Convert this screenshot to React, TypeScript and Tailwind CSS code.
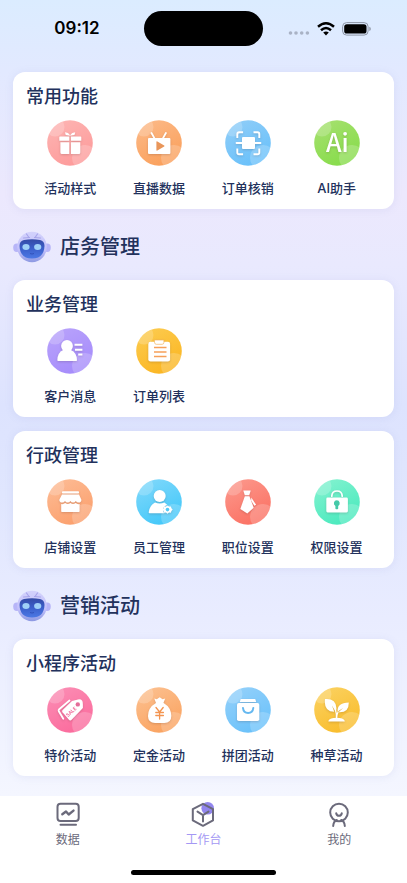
import type { ReactNode } from "react";

const GLYPH_FONT = '"Noto Sans CJK SC", sans-serif';

interface MenuItem {
  id: string;
  label: string;
  from: string;
  to: string;
  glyph: ReactNode;
}

// 圆形底图 + 白色图形
const MenuIcon = ({ id, from, to, glyph }: MenuItem) => (
  <svg viewBox="0 0 46 46" className="size-[46px]" aria-hidden="true">
    <defs>
      <linearGradient id={`bg-${id}`} x1="0.2" y1="0" x2="0.7" y2="1">
        <stop offset="0" stopColor={from} />
        <stop offset="1" stopColor={to} />
      </linearGradient>
      <clipPath id={`clip-${id}`}>
        <circle cx="23" cy="23" r="22.8" />
      </clipPath>
    </defs>
    <circle cx="23" cy="23" r="22.8" fill={`url(#bg-${id})`} />
    <g clipPath={`url(#clip-${id})`} fill="#fff" fillOpacity="0.2">
      <circle cx="8" cy="7" r="9.5" />
      <circle cx="38" cy="38" r="13" />
    </g>
    <g
      className="drop-shadow-[0_1px_1px_rgba(60,30,30,0.18)]"
      fill="#fff"
      stroke="none"
      strokeLinecap="round"
      strokeLinejoin="round"
    >
      {glyph}
    </g>
  </svg>
);

const commonItems: MenuItem[] = [
  {
    id: "style",
    label: "活动样式",
    from: "#fdb4b2",
    to: "#fd9a9a",
    glyph: (
      <>
        <path d="M13 16.5h9.3v4.2H12.3v-3.5q0-.7.7-.7zM23.9 16.5h9.6q.8 0 .8.7v3.5H23.9z" />
        <path d="M13.4 22.2h8.9V34h-7.4q-1.5 0-1.5-1.5zM23.9 22.2h9.4v10.3q0 1.5-1.5 1.5h-7.9z" />
        <path d="M18 12.3q3.5.2 5.1 3 1.6-2.8 5.1-3l-.7 2.6-3.4.6h-2l-3.4-.6z" />
      </>
    ),
  },
  {
    id: "live",
    label: "直播数据",
    from: "#fcb987",
    to: "#fa9f5a",
    glyph: (
      <>
        <path d="M15.5 13l3 5.4M29.9 13l-3 5.4" stroke="#fff" strokeWidth="1.8" />
        <rect x="12" y="18" width="22.4" height="16" rx="1" />
        <path d="M20.4 22v8q0 1 1 .5l6.8-4q.7-.5 0-1l-6.8-4q-1-.5-1 .5z" fill="#e9965a" />
      </>
    ),
  },
  {
    id: "verify",
    label: "订单核销",
    from: "#8fcdf8",
    to: "#68c0fa",
    glyph: (
      <>
        <path
          d="M12.3 18v-4q0-1.8 1.8-1.8h4M28.5 12.2h4q1.8 0 1.8 1.8v4M34.3 28.5v4q0 1.8-1.8 1.8h-4M18.1 34.3h-4q-1.8 0-1.8-1.8v-4"
          fill="none"
          stroke="#fff"
          strokeWidth="1.9"
          strokeLinecap="butt"
        />
        <path d="M11.5 23h24" stroke="#fff" strokeWidth="1.8" />
        <rect x="17" y="17" width="13" height="12" rx="1" />
      </>
    ),
  },
  {
    id: "ai",
    label: "AI助手",
    from: "#a5e06e",
    to: "#86dc4a",
    glyph: (
      <text x="23.4" y="32" textAnchor="middle" fontSize="25" fontWeight="500" fontFamily={GLYPH_FONT}>
        Ai
      </text>
    ),
  },
];

const businessItems: MenuItem[] = [
  {
    id: "customer",
    label: "客户消息",
    from: "#b8a2fb",
    to: "#a58bfb",
    glyph: (
      <>
        <circle cx="20" cy="18" r="5.9" />
        <path d="M16.2 22h7.6q6 2.5 6.2 10.2 0 .8-.8.8H11.1q-.8 0-.8-.8Q10.5 24.5 16.2 22z" />
        <path d="M27.5 16.8h7.9M28 21.8h7.4M31.2 26.5h4.2" stroke="#fff" strokeWidth="1.9" strokeLinecap="butt" />
      </>
    ),
  },
  {
    id: "orders",
    label: "订单列表",
    from: "#fccb4f",
    to: "#fbb520",
    glyph: (
      <>
        <rect x="12.3" y="13.8" width="21.8" height="19.6" rx="2.2" />
        <path d="M18.5 12h9.4v2.5q0 1.8-1.8 1.8h-5.8q-1.8 0-1.8-1.8z" stroke="#f3b45c" strokeWidth="0.7" />
        <path d="M18 19.5h12.5M18 24h12.5M18 28.5h12.5" stroke="#f6a05a" strokeWidth="1.7" strokeLinecap="butt" />
      </>
    ),
  },
];

const adminItems: MenuItem[] = [
  {
    id: "shop",
    label: "店铺设置",
    from: "#fdbb94",
    to: "#fb9f6c",
    glyph: (
      <>
        <rect x="15" y="12.3" width="17" height="2.2" rx="0.8" />
        <path d="M15 15.5h17l2.4 5.3q0 2.8-2.8 2.8-1.8 0-2.8-1.6-1 1.6-2.7 1.6t-2.7-1.6q-1 1.6-2.7 1.6T18 22q-1 1.6-2.8 1.6-2.9 0-2.9-2.8z" />
        <path d="M14.2 25q2.2.5 4-.9 2.6 1.7 5.2 0 2.6 1.7 5.2 0 1.8 1.4 4 .9v7.3q0 .7-.7.7h-17q-.7 0-.7-.7z" />
      </>
    ),
  },
  {
    id: "staff",
    label: "员工管理",
    from: "#7fd8fb",
    to: "#41c7f9",
    glyph: (
      <>
        <circle cx="23.7" cy="17" r="6" />
        <path d="M19 23.5q4.7 2 9.4 0l3 2.4q-4.8 1.6-4.4 5.4.2 1.9 1.3 3H13.6q-1 0-.9-1 .8-7 6.3-9.8z" />
        <path d="M31.5 26.5l1.5 1.1 1.9-.1.5 1.8 1.3 1.3-1.3 1.3-.5 1.8-1.9-.1-1.5 1.1-1.5-1.1-1.9.1-.5-1.8-1.3-1.3 1.3-1.3.5-1.8 1.9.1z" />
        <circle cx="31.5" cy="30.6" r="1.8" fill="#52caf7" />
      </>
    ),
  },
  {
    id: "position",
    label: "职位设置",
    from: "#fc978b",
    to: "#fb7062",
    glyph: (
      <>
        <path d="M18.3 11.5h7.4l-1.5 4.8h-4.4z" />
        <path d="M19.8 17.2h4.6l4.3 11.6-6.4 5.7-7-4.6z" />
        <path d="M26.3 18.5l4.8 7.2-1.7 1-3.2-5z" />
      </>
    ),
  },
  {
    id: "permission",
    label: "权限设置",
    from: "#82f2cf",
    to: "#48e9bd",
    glyph: (
      <>
        <path d="M17.8 17.2v-.3q.3-4.9 5.2-4.9t5.2 4.9v.3" fill="none" stroke="#fff" strokeWidth="1.7" />
        <rect x="12.3" y="18.6" width="21.6" height="14.8" rx="1.3" />
        <path
          d="M22.8 21.3a3 3 0 0 1 1.4 5.6v2.6q0 .8-.8.8h-1.2q-.8 0-.8-.8v-2.6a3 3 0 0 1 1.4-5.6z"
          fill="#45c9a8"
        />
      </>
    ),
  },
];

const marketingItems: MenuItem[] = [
  {
    id: "special",
    label: "特价活动",
    from: "#fb8db4",
    to: "#fb6a9c",
    glyph: (
      <>
        <path d="M22.5 13.5l-10.3 8.7q-1 1-.4 2l4.5 7.6" fill="none" stroke="#fff" strokeWidth="1.8" />
        <path d="M25 14l6-1.6q3-.4 4.2 1.4.8 1.4.7 7.2l-11 11.6q-1.7 1.7-3.2 0l-6.2-7.3q-.8-1.2.2-2.2z" />
        <circle cx="30.8" cy="17.4" r="2.2" fill="#e46c99" />
        <text
          x="25.5"
          y="26"
          transform="rotate(-43 25.5 26)"
          textAnchor="middle"
          fontSize="5"
          fontWeight="700"
          fontFamily={GLYPH_FONT}
          fill="#f0709d"
        >
          SALE
        </text>
      </>
    ),
  },
  {
    id: "deposit",
    label: "定金活动",
    from: "#fcc08f",
    to: "#faa25f",
    glyph: (
      <>
        <path d="M18.3 11.5l2.5.7 2.9-1.9 2.9 1.9 2.6-.7-1.9 4.7h-7.2z" />
        <path d="M20 16h7.6q7.6 4.5 7.7 13 0 7-7 7h-9.2q-7 0-7.100-7Q12 20.500 20 16z" />
        <path
          d="M20 20.500l3.600 4.500 3.600-4.500M23.600 25v7M19.800 25.500h7.600M19.800 28.500h7.600"
          fill="none"
          stroke="#f39450"
          strokeWidth="1.300"
        />
      </>
    ),
  },
  {
    id: "group",
    label: "拼团活动",
    from: "#93d0fa",
    to: "#69c1fa",
    glyph: (
      <>
        <path d="M15.7 12h14.500l1 2.900H14.700z" />
        <rect x="12" y="16" width="22.3" height="18" rx="1.8" />
        <path d="M18 21q.5 5 5.100 5t5.200-5" fill="none" stroke="#65b8f0" strokeWidth="2" />
      </>
    ),
  },
  {
    id: "seed",
    label: "种草活动",
    from: "#fbd160",
    to: "#f9bc2a",
    glyph: (
      <>
        <path d="M11 12q11-.8 11.4 9 .1 2-.8 3.700l-3.600-6.300 2.200 6.300Q9.500 24.500 11 12z" />
        <path d="M34.8 15.500Q35 26 24.500 25.300l4.600-4.400-5.400 3.600q-1-8.500 11.100-9z" />
        <path d="M21.500 23q1.200 3.500.9 8.500M24 25q-1.200 2.500-1.300 6" fill="none" stroke="#fff" strokeWidth="1.2" />
        <path d="M14.300 34q1.500-3.200 8.300-3.200t8.200 3.200q0 .6-.8.600H15q-.7 0-.7-.6z" />
      </>
    ),
  },
];

const StatusBar = () => (
  <header className="grid h-[72px] grid-cols-[1fr_119px_1fr] items-start pt-[11px]">
    <div className="flex h-[35px] items-center justify-center pl-[10px] font-[Inter] text-[17px] font-semibold text-black">
      09:12
    </div>
    <div className="h-[35px] rounded-full bg-black" />
    <div className="flex h-[35px] items-center justify-end gap-[7px] pr-9">
      <svg viewBox="0 0 22 14" className="h-[14px] w-[22px]" fill="#a9b2c5" aria-hidden="true">
        <circle cx="2.5" cy="11" r="1.8" />
        <circle cx="8" cy="11" r="1.8" />
        <circle cx="13.7" cy="11" r="1.8" />
        <circle cx="19.4" cy="11" r="1.8" />
      </svg>
      <svg viewBox="0 0 18 14" className="h-[14px] w-[18px]" aria-hidden="true">
        <g fill="none" stroke="#000" strokeWidth="2.5">
          <path d="M1 4.800q8-7 16 0" />
          <path d="M4 8.200q5-4.400 10 0" />
        </g>
        <path d="M9 13.400l-2.800-2.900q2.800-2.200 5.600 0z" />
      </svg>
      <svg viewBox="0 0 29 14" className="h-[14px] w-[29px]" aria-hidden="true">
        <rect x="0.6" y="0.6" width="25.5" height="12.5" rx="4" fill="none" stroke="#8d95a5" />
        <rect x="2.2" y="2.2" width="22.3" height="9.3" rx="2.6" />
        <path d="M27.300 4.800q1.500.6 1.500 2.100t-1.500 2.100z" fill="#8d95a5" />
      </svg>
    </div>
  </header>
);

const Robot = ({ id }: { id: string }) => (
  <svg viewBox="0 0 38 32" className="h-8 w-[38px]" aria-hidden="true">
    <defs>
      <linearGradient id={`head-${id}`} x1="0" y1="0" x2="0" y2="1">
        <stop offset="0" stopColor="#d3d2fc" />
        <stop offset="0.6" stopColor="#c3c1fa" />
        <stop offset="1" stopColor="#8c98e2" />
      </linearGradient>
      <linearGradient id={`face-${id}`} x1="0" y1="0" x2="0" y2="1">
        <stop offset="0" stopColor="#334aa6" />
        <stop offset="0.5" stopColor="#3c60cc" />
        <stop offset="1" stopColor="#4b78e4" />
      </linearGradient>
    </defs>
    <ellipse cx="3.8" cy="16.8" rx="3.6" ry="4.2" fill="#b7b5f8" />
    <ellipse cx="34.2" cy="16.8" rx="3.6" ry="4.2" fill="#b7b5f8" />
    <ellipse cx="19" cy="16" rx="14.8" ry="15.3" fill={`url(#head-${id})`} />
    <path
      d="M13.500 3l2.500 3.500M24.500 3l-2.500 3.500M10.500 7l6-.5M27.500 7l-6-.5"
      stroke="#a8a5ea"
      strokeWidth="1.2"
      strokeLinecap="round"
    />
    <path d="M11 9q8-1.400 16 0 4.500 1 4.500 6Q31 27.500 19 27.500T6.500 15q0-5 4.500-6z" fill={`url(#face-${id})`} />
    <ellipse cx="13" cy="16" rx="3.6" ry="3" fill="#9fd0f8" />
    <ellipse cx="24.7" cy="16" rx="3.600" ry="3" fill="#9fd0f8" />
    <path d="M17 22.500q2 1 4 0" stroke="#2c4bb4" strokeWidth="0.8" fill="none" />
  </svg>
);

const SectionTitle = ({ id, title }: { id: string; title: string }) => (
  <div className="flex h-[71px] items-center gap-[9px] pt-[5px]">
    <Robot id={id} />
    <h2 className="text-[20px] leading-7 font-medium">{title}</h2>
  </div>
);

const MenuCard = ({ title, items }: { title: string; items: MenuItem[] }) => (
  <section className="rounded-xl bg-white px-[13px] pt-[13px] pb-3 shadow-[0_1px_8px_rgba(120,130,200,0.12)]">
    <h3 className="text-[18px] leading-6 font-medium">{title}</h3>
    <div className="mt-[11px] grid grid-cols-4">
      {items.map((item) => (
        <button key={item.id} type="button" className="flex flex-col items-center gap-[13px]">
          <MenuIcon {...item} />
          <span className="text-[13px] leading-[18px] font-medium">{item.label}</span>
        </button>
      ))}
    </div>
  </section>
);

const tabs = [
  {
    label: "数据",
    active: false,
    icon: (
      <>
        <rect x="2.5" y="1.8" width="21.2" height="17.2" rx="3" />
        <path d="M7.300 12.300l3.700-2.800 2.700 3 4.800-3.900" strokeWidth="2.4" />
        <path d="M5.500 22.700h15.500" />
      </>
    ),
  },
  {
    label: "工作台",
    active: true,
    icon: (
      <>
        <circle cx="17.7" cy="6.3" r="6.3" fill="#9286ee" stroke="none" />
        <path d="M13 1.800l10 5.400v11.200l-10 5.400-10.200-5.400V7.200z" />
        <path d="M7.500 9.600l5.500 3.600 5.500-3.600M13 13.200v6.300" />
      </>
    ),
  },
  {
    label: "我的",
    active: false,
    icon: (
      <>
        <circle cx="13" cy="10.5" r="8.8" />
        <path d="M10.200 11.200q.5 2.600 2.800 2.600t2.800-2.600" />
        <path d="M7.200 24q.3-4.600 3.600-6M18.800 24q-.3-4.600-3.600-6" />
      </>
    ),
  },
];

const TabBar = () => (
  <nav className="mt-auto bg-white pt-[6px] pb-2">
    <div className="grid grid-cols-3">
      {tabs.map((tab) => (
        <button
          key={tab.label}
          type="button"
          className={`flex flex-col items-center ${tab.active ? "text-[#a498f4]" : "text-[#6b6a7b]"}`}
        >
          <svg
            viewBox="0 0 26 26"
            className="size-[26px]"
            fill="none"
            stroke="#6b6a7b"
            strokeWidth="2"
            strokeLinecap="round"
            strokeLinejoin="round"
            aria-hidden="true"
          >
            {tab.icon}
          </svg>
          <span className="mt-[3px] text-[12px] leading-[18px]">{tab.label}</span>
        </button>
      ))}
    </div>
    {/* 底部横条 */}
    <div className="mx-auto mt-[21px] h-[5px] w-[145px] rounded-full bg-black" />
  </nav>
);

const App = () => {
  return (
    <div
      className="flex min-h-screen flex-col bg-[linear-gradient(180deg,#dbecff_0%,#e2e9ff_8%,#ece8fd_22%,#e9e9fe_30%,#dde3fe_46%,#e0e6fe_56%,#e9ecff_70%,#f4f6ff_90%)] text-[#22315c]"
      style={{ fontFamily: 'Inter, "Noto Sans CJK SC", sans-serif' }}
    >
      <StatusBar />
      <main className="px-[13px] pb-5">
        <MenuCard title="常用功能" items={commonItems} />
        <SectionTitle id="store" title="店务管理" />
        <div className="flex flex-col gap-[14px]">
          <MenuCard title="业务管理" items={businessItems} />
          <MenuCard title="行政管理" items={adminItems} />
        </div>
        <SectionTitle id="marketing" title="营销活动" />
        <MenuCard title="小程序活动" items={marketingItems} />
      </main>
      <TabBar />
    </div>
  );
};

export default App;
